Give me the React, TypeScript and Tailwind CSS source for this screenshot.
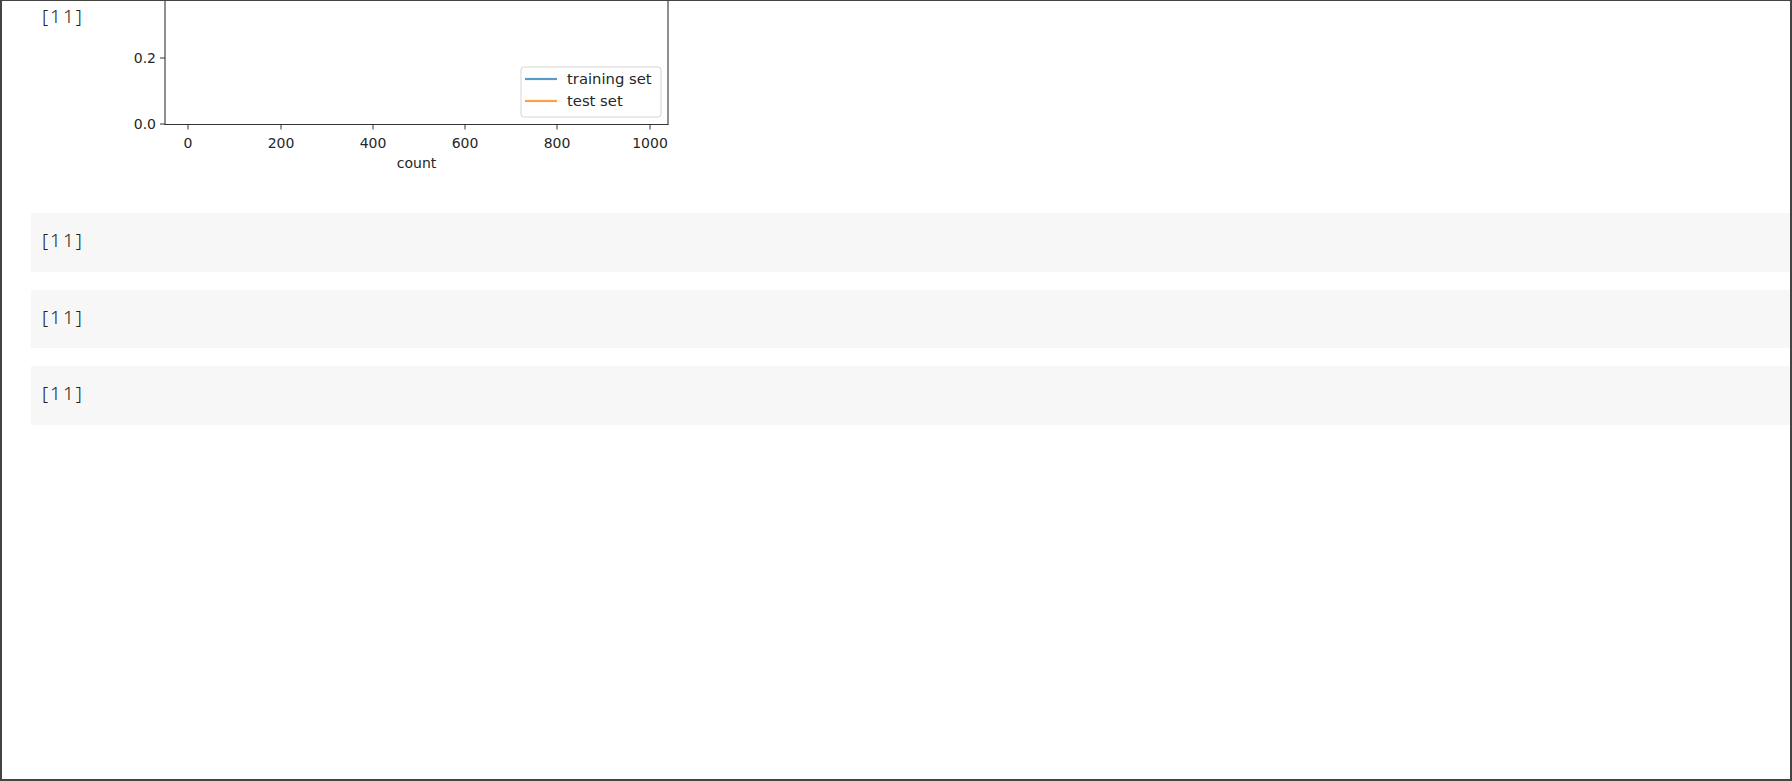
const prompt = "[11]";

function Prompt() {
  return (
    <span className="font-['Noto_Sans','Liberation_Sans',sans-serif] text-[19px] leading-[20px] font-light tracking-[2px] text-[#222]">
      {prompt}
    </span>
  );
}

const xTicks = [
  { x: 88, label: "0" },
  { x: 181, label: "200" },
  { x: 273, label: "400" },
  { x: 365, label: "600" },
  { x: 457, label: "800" },
  { x: 550, label: "1000" },
];

const yTicks = [
  { y: 57, label: "0.2" },
  { y: 123, label: "0.0" },
];

function Chart() {
  return (
    <svg width={600} height={180} viewBox="0 0 600 180" className="block shrink-0">
      <g fontFamily="'DejaVu Sans', sans-serif" fontSize={14} fill="#262626">
        {/* spines */}
        <line x1={65} y1={-2} x2={65} y2={123.5} stroke="#333" strokeWidth={1.1} />
        <line x1={568} y1={-2} x2={568} y2={123.5} stroke="#333" strokeWidth={1.1} />
        <line x1={64.5} y1={123.5} x2={568.5} y2={123.5} stroke="#333" strokeWidth={1.1} />

        {yTicks.map((t) => (
          <g key={t.label}>
            <line x1={60} y1={t.y} x2={65} y2={t.y} stroke="#333" strokeWidth={1} />
            <text x={56} y={t.y + 5} textAnchor="end">
              {t.label}
            </text>
          </g>
        ))}

        {xTicks.map((t) => (
          <g key={t.label}>
            <line x1={t.x} y1={123.5} x2={t.x} y2={128.5} stroke="#333" strokeWidth={1} />
            <text x={t.x} y={147} textAnchor="middle">
              {t.label}
            </text>
          </g>
        ))}

        <text x={316.5} y={167} textAnchor="middle">
          count
        </text>

        {/* legend */}
        <rect x={421} y={66} width={140} height={50} rx={3} fill="#fff" stroke="#d4d4d4" strokeWidth={1} />
        <line x1={425} y1={78} x2={457} y2={78} stroke="#1f77b4" strokeOpacity={0.75} strokeWidth={2.2} />
        <line x1={425} y1={100} x2={457} y2={100} stroke="#ff7f0e" strokeOpacity={0.75} strokeWidth={2.2} />
        <text x={467} y={83} fontSize={14.8}>training set</text>
        <text x={467} y={105} fontSize={14.8}>test set</text>
      </g>
    </svg>
  );
}

export default function App() {
  return (
    <div className="h-[781px] w-full overflow-hidden border-x-2 border-b-2 border-t border-[#444] bg-white">
      <div className="flex h-[194px] items-start">
        <div className="ml-[40px] w-[58px] pt-[4px]">
          <Prompt />
        </div>
        <Chart />
      </div>

      <div className="mt-[18px] flex flex-col gap-[18px] pl-[29px]">
        {[0, 1, 2].map((i) => (
          <div key={i} className="h-[58.5px] bg-[#f7f7f7] pl-[11px] pt-[16px]">
            <Prompt />
          </div>
        ))}
      </div>
    </div>
  );
}
